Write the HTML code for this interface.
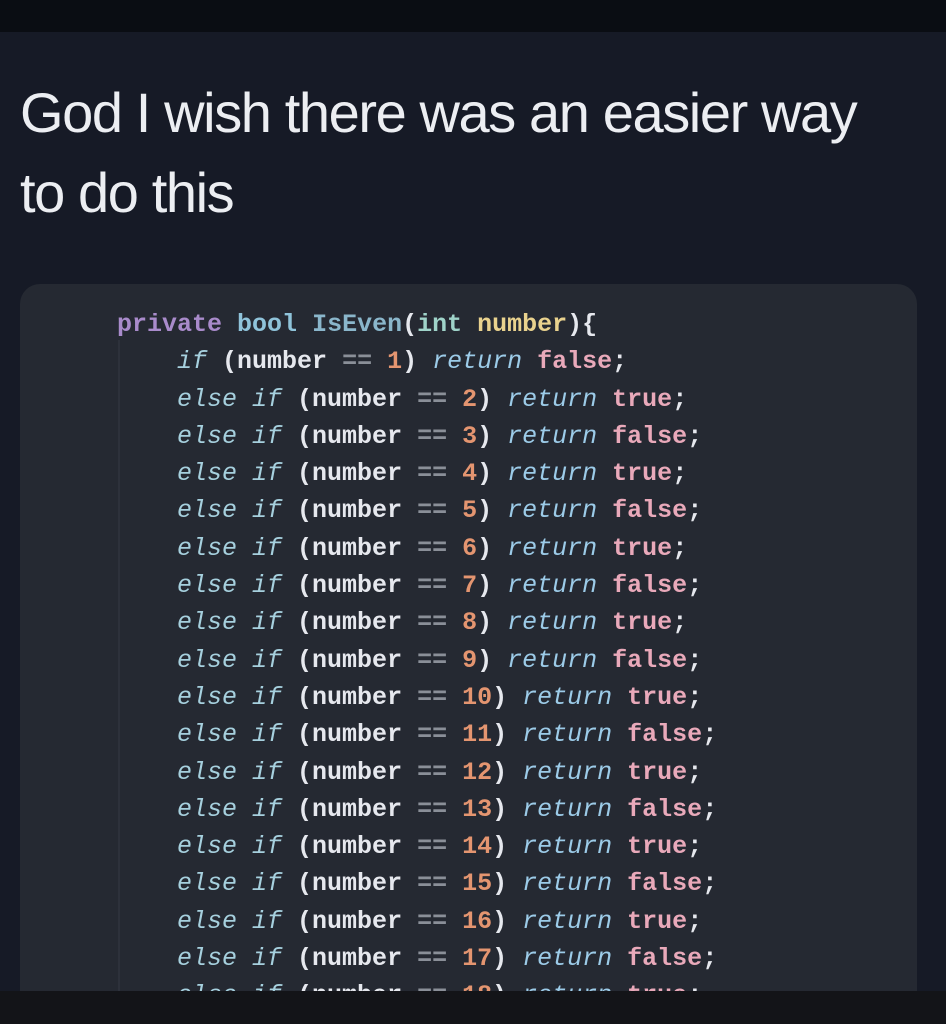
<!DOCTYPE html>
<html><head><style>
html,body{margin:0;padding:0;width:946px;height:1024px;overflow:hidden;background:#161a26;}
.top{position:absolute;left:0;top:0;width:946px;height:32px;background:#0a0d13;}
.bot{position:absolute;left:0;top:991px;width:946px;height:33px;background:#131418;}
.title{position:absolute;left:20px;top:73px;font-family:"Liberation Sans",sans-serif;font-size:56px;line-height:80px;color:#eceef2;letter-spacing:-1.4px;white-space:nowrap;}
.box{position:absolute;left:20px;top:284px;width:897px;height:707px;background:#252932;border-radius:20px 20px 0 0;overflow:hidden;}
.guide{position:absolute;left:98px;top:56px;width:2px;height:700px;background:#2d313b;}
.code{position:absolute;left:97px;top:22px;font-family:"Liberation Mono",monospace;font-weight:bold;font-size:25px;line-height:37.3px;white-space:pre;color:#e6e8ee;}
.k{color:#a98bcb}.t{color:#8fc3da}.f{color:#8ab6cb}.i{color:#9fd3c9}.n{color:#e9d28e}
.e{color:#a6d0de;font-style:italic;font-weight:normal}.r{color:#9ccbe8;font-style:italic;font-weight:normal}
.d{color:#e49570}.b{color:#e9a9ba}.o{color:#8a8f98}
</style></head><body>
<div class="top"></div>
<div class="title">God I wish there was an easier way<br>to do this</div>
<div class="box"><div class="guide"></div><div class="code"><span class="k">private</span> <span class="t">bool</span> <span class="f">IsEven</span>(<span class="i">int</span> <span class="n">number</span>){
    <span class="e">if</span> (number <span class="o">==</span> <span class="d">1</span>) <span class="r">return</span> <span class="b">false</span>;
    <span class="e">else if</span> (number <span class="o">==</span> <span class="d">2</span>) <span class="r">return</span> <span class="b">true</span>;
    <span class="e">else if</span> (number <span class="o">==</span> <span class="d">3</span>) <span class="r">return</span> <span class="b">false</span>;
    <span class="e">else if</span> (number <span class="o">==</span> <span class="d">4</span>) <span class="r">return</span> <span class="b">true</span>;
    <span class="e">else if</span> (number <span class="o">==</span> <span class="d">5</span>) <span class="r">return</span> <span class="b">false</span>;
    <span class="e">else if</span> (number <span class="o">==</span> <span class="d">6</span>) <span class="r">return</span> <span class="b">true</span>;
    <span class="e">else if</span> (number <span class="o">==</span> <span class="d">7</span>) <span class="r">return</span> <span class="b">false</span>;
    <span class="e">else if</span> (number <span class="o">==</span> <span class="d">8</span>) <span class="r">return</span> <span class="b">true</span>;
    <span class="e">else if</span> (number <span class="o">==</span> <span class="d">9</span>) <span class="r">return</span> <span class="b">false</span>;
    <span class="e">else if</span> (number <span class="o">==</span> <span class="d">10</span>) <span class="r">return</span> <span class="b">true</span>;
    <span class="e">else if</span> (number <span class="o">==</span> <span class="d">11</span>) <span class="r">return</span> <span class="b">false</span>;
    <span class="e">else if</span> (number <span class="o">==</span> <span class="d">12</span>) <span class="r">return</span> <span class="b">true</span>;
    <span class="e">else if</span> (number <span class="o">==</span> <span class="d">13</span>) <span class="r">return</span> <span class="b">false</span>;
    <span class="e">else if</span> (number <span class="o">==</span> <span class="d">14</span>) <span class="r">return</span> <span class="b">true</span>;
    <span class="e">else if</span> (number <span class="o">==</span> <span class="d">15</span>) <span class="r">return</span> <span class="b">false</span>;
    <span class="e">else if</span> (number <span class="o">==</span> <span class="d">16</span>) <span class="r">return</span> <span class="b">true</span>;
    <span class="e">else if</span> (number <span class="o">==</span> <span class="d">17</span>) <span class="r">return</span> <span class="b">false</span>;
    <span class="e">else if</span> (number <span class="o">==</span> <span class="d">18</span>) <span class="r">return</span> <span class="b">true</span>;</div></div>
<div class="bot"></div>
</body></html>
